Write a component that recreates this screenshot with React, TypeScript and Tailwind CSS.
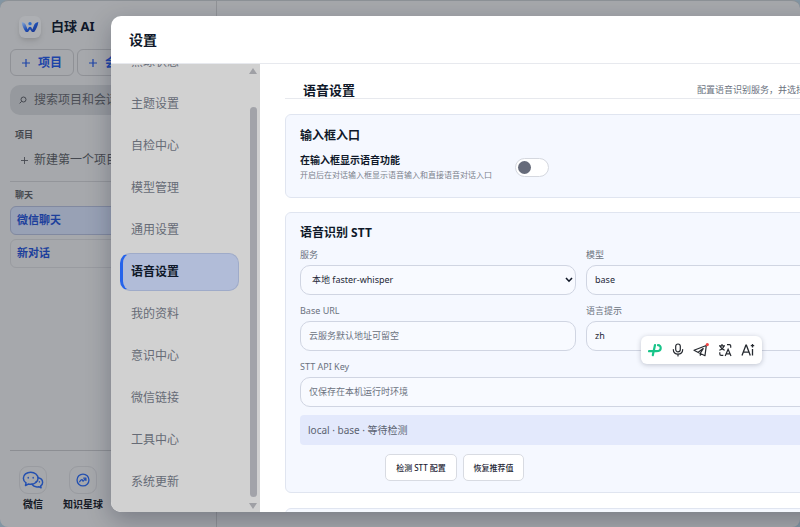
import React from "react";

interface FieldProps {
  id: string;
  label: string;
  value?: string;
  placeholder?: string;
  className?: string;
}

const Field: React.FC<FieldProps> = (props: FieldProps) => {
  const { id, label, value, placeholder, className = "" } = props;

  return (
    <div className={`flex flex-col ${className}`}>
      <label htmlFor={id} className="h-5 text-[9px] leading-5 text-[#6b7280]">
        {label}
      </label>
      <input
        id={id}
        className="h-[30px] w-full rounded-[10px] border border-[#d0d5e2] bg-[#f8faff] px-2 pb-[2px] text-[9px] text-[#1f2937] placeholder:text-[#6b7280]"
        defaultValue={value}
        placeholder={placeholder}
      />
    </div>
  );
};

const navItems = [
  "黑球状态",
  "主题设置",
  "自检中心",
  "模型管理",
  "通用设置",
  "语音设置",
  "我的资料",
  "意识中心",
  "微信链接",
  "工具中心",
  "系统更新",
];

const Logo = () => (
  <svg viewBox="0 0 24 24" className="h-5 w-5" fill="none">
    <defs>
      <linearGradient id="logo" x1="0" y1="0" x2="1" y2="1">
        <stop offset="0" stopColor="#8fadd4" />
        <stop offset="0.5" stopColor="#1f4fb4" />
        <stop offset="1" stopColor="#1a2f86" />
      </linearGradient>
    </defs>
    <path
      d="M2 6c3 .5 4.600 2.200 5.600 5l1.600 4 1.300-2.600c.6-1.100 2.400-1.100 3 0l1.300 2.600 1.600-4c1-2.800 2.600-4.500 5.600-5-.6 5-2.700 9-5 12h-2.600L12 14.600 9.600 18H7C4.700 15 2.600 11 2 6z"
      fill="url(#logo)"
    />
    <circle cx="12" cy="8" r="2" fill="#2c6bc8" />
  </svg>
);

const Plus = () => (
  <svg viewBox="0 0 8 8" className="h-2 w-2" stroke="currentColor" strokeWidth="1.200">
    <path d="M4 0v8M0 4h8" />
  </svg>
);

const Sidebar = () => (
  <aside className="flex w-[217px] shrink-0 flex-col border-r border-[#919397] px-[10px] pb-[15px]">
    <div className="mt-[14px] flex h-6 items-center gap-[10px] pl-[9px]">
      <span className="flex h-[22px] w-[22px] items-center justify-center rounded-md bg-[#adafb3] shadow-md">
        <Logo />
      </span>
      <h1 className="text-[13px] font-bold text-[#0f1829]">白球 AI</h1>
    </div>

    <div className="mt-[10px] flex gap-[3px]">
      <button className="flex h-[27px] w-16 shrink-0 items-center justify-center gap-2 rounded-md border border-[#8f9196] text-[12px] font-bold text-[#1d44a8]">
        <Plus /> 项目
      </button>
      <button className="flex h-[27px] w-16 shrink-0 items-center justify-center gap-2 rounded-md border border-[#8f9196] text-[12px] font-bold text-[#1d44a8]">
        <Plus /> 会话
      </button>
    </div>

    <div className="mt-[9px] flex h-[30px] items-center rounded-[10px] bg-[#96999e] pl-2">
      <svg viewBox="0 0 10 10" className="h-[10px] w-[10px] shrink-0" fill="none" stroke="#45484f">
        <circle cx="5.500" cy="4.500" r="2.500" />
        <path d="M3.700 6.300 1.600 8.400" />
      </svg>
      <input
        aria-label="搜索项目和会话"
        placeholder="搜索项目和会话"
        className="ml-[6px] w-full bg-transparent text-[12px] placeholder:text-[#4b4e55]"
      />
    </div>

    <h2 className="mt-3 pl-[5px] text-[9px] leading-4 font-bold text-[#45484f]">项目</h2>
    <button className="mt-[7px] flex h-5 items-center gap-[6px] pl-[11px] text-[12px] text-[#45484f]">
      <svg viewBox="0 0 8 8" className="h-[7px] w-[7px]" stroke="currentColor">
        <path d="M4 0v8M0 4h8" />
      </svg>
      新建第一个项目
    </button>

    <h2 className="mt-[11px] border-t border-[#93959a] pt-[5px] pl-[5px] text-[9px] leading-4 font-bold text-[#45484f]">
      聊天
    </h2>
    <button className="mt-[3px] h-[29px] shrink-0 rounded-md border border-[#8189a0] bg-[#98a1b5] pl-[6px] text-left text-[11px] font-bold text-[#1d3f9c]">
      微信聊天
    </button>
    <button className="mt-1 h-[29px] shrink-0 rounded-md border border-[#999ba0] pl-[6px] text-left text-[11px] font-bold text-[#1d3f9c]">
      新对话
    </button>

    <div className="mt-auto flex border-t border-[#8c8e93] pt-[15px] text-[10px] font-bold text-[#151a26]">
      <button className="flex w-[46px] flex-col items-center gap-[3px]">
        <span className="flex h-7 w-7 items-center justify-center rounded-[9px] border border-[#999ba0]">
          <svg viewBox="0 0 24 20" className="h-5 w-[22px]" fill="none" stroke="#2450b0" strokeWidth="1.600" strokeLinecap="round" strokeLinejoin="round">
            <path d="M9.500 1.500C5 1.500 1.500 4.300 1.500 8c0 2.100 1.100 3.900 2.900 5.100L3.800 16l3-1.600c.9.200 1.800.3 2.700.3 4.500 0 8-2.900 8-6.600s-3.500-6.600-8-6.600z" />
            <path d="M17.600 7.600c2.900.6 4.900 2.600 4.900 5 0 1.600-.8 2.900-2.100 3.800l.4 2.200-2.400-1.300c-3.100.6-6.200-.4-7.500-2.700" />
            <path d="M6.800 7.300v.6M12.200 7.300v.6M15.300 12v.2M19 12v.2" />
          </svg>
        </span>
        微信
      </button>
      <button className="flex w-[54px] flex-col items-center gap-[3px] whitespace-nowrap">
        <span className="flex h-7 w-7 items-center justify-center rounded-[9px] border border-[#999ba0]">
          <svg viewBox="0 0 16 16" className="h-[14px] w-[14px]" fill="none" stroke="#2450b0" strokeWidth="1.500" strokeLinecap="round" strokeLinejoin="round">
            <circle cx="8" cy="8" r="6.800" />
            <path d="M4.200 10c1.200-2 2.200-2.800 2.800-2.200.7.700.6 1.700 1.400 1.200L11 6.300M8.800 5.800l2.500.2v2.500" />
          </svg>
        </span>
        知识星球
      </button>
    </div>
  </aside>
);

const SettingsNav = () => (
  <div className="flex w-[149px] shrink-0 overflow-hidden bg-[#d1d1d1]">
    <nav className="-mt-[21px] flex flex-1 flex-col gap-1 px-[9px]">
      {navItems.map((item) => (
        <button
          key={item}
          className={`h-[38px] shrink-0 rounded-[10px] text-left text-[12px] ${
            item === "语音设置"
              ? "border border-l-[3px] border-[#9fabc9] border-l-[#2563eb] bg-[#b1bcd8] pl-2 font-bold text-[#0f1829]"
              : "pl-[11px] text-[#666b76]"
          }`}
        >
          {item}
        </button>
      ))}
    </nav>
    <div className="flex w-3 flex-col items-center pt-1 pr-[2px] pb-[3px]">
      <svg viewBox="0 0 8 6" className="h-[6px] w-2" fill="#9fa0a5">
        <path d="M4 0l4 6H0z" />
      </svg>
      <div className="mt-[33px] w-[7px] flex-1 rounded-full bg-[#a2a3a9]" />
      <svg viewBox="0 0 8 6" className="mt-[6px] h-[6px] w-2" fill="#9fa0a5">
        <path d="M0 0h8L4 6z" />
      </svg>
    </div>
  </div>
);

const VoiceSettings = () => (
  <main className="flex-1 overflow-hidden pt-[15px] pr-4 pl-[25px]">
    <div className="flex h-5 items-end justify-between border-b border-[#e7e9ee] pl-[18px] whitespace-nowrap">
      <h3 className="text-[13px] leading-4 font-bold text-[#0f1829]">语音设置</h3>
      <p className="text-[9px] leading-4 text-[#6b7280]">配置语音识别服务，并选择语音对话使用方式</p>
    </div>

    <section className="mt-[15px] h-[84px] rounded-md border border-[#e0e5f0] bg-[#f5f8ff] px-[14px] pt-[13px]">
      <h4 className="text-[12px] leading-4 font-bold text-[#0f1829]">输入框入口</h4>
      <div className="mt-2 flex items-center gap-[18px]">
        <div className="w-[197px] whitespace-nowrap">
          <label htmlFor="voice" className="block text-[10px] leading-4 font-bold text-[#0f1829]">
            在输入框显示语音功能
          </label>
          <p className="text-[8px] leading-[14px] text-[#7b818c]">
            开启后在对话输入框显示语音输入和直接语音对话入口
          </p>
        </div>
        <input
          id="voice"
          type="checkbox"
          role="switch"
          className="h-[19px] w-[34px] appearance-none rounded-full border border-[#d5d8df] bg-white p-[2px] before:block before:h-[13px] before:w-[13px] before:rounded-full before:bg-[#666b7a] checked:before:ml-auto"
        />
      </div>
    </section>

    <section className="mt-[14px] h-[281px] rounded-md border border-[#e0e5f0] bg-[#f5f8ff] px-[14px] pt-3">
      <h4 className="text-[12px] leading-4 font-bold text-[#0f1829]">语音识别 STT</h4>
      <div className="mt-1 grid grid-cols-2 gap-x-[10px] gap-y-[6px]">
        <div className="relative flex flex-col">
          <label htmlFor="service" className="h-5 text-[9px] leading-5 text-[#6b7280]">
            服务
          </label>
          <select
            id="service"
            className="h-[30px] appearance-none rounded-[10px] border border-[#d0d5e2] bg-[#f8faff] px-[11px] text-[9px] text-[#1f2937]"
          >
            <option>本地 faster-whisper</option>
          </select>
          <svg viewBox="0 0 8 6" className="pointer-events-none absolute right-[3px] bottom-3 h-[6px] w-2" fill="none" stroke="#111827" strokeWidth="1.600">
            <path d="M1 1l3 3.200L7 1" />
          </svg>
        </div>
        <Field id="model" label="模型" value="base" />
        <Field id="url" label="Base URL" placeholder="云服务默认地址可留空" />
        <Field id="lang" label="语言提示" value="zh" />
        <Field id="key" label="STT API Key" placeholder="仅保存在本机运行时环境" className="col-span-2" />
      </div>
      <p className="mt-2 h-[30px] rounded bg-[#e3e9fc] px-2 text-[10px] leading-[30px] text-[#5b6371]">
        local · base · 等待检测
      </p>
      <div className="mt-[9px] flex gap-[6px] pl-[85px] text-[8px] font-medium text-[#1c2433]">
        <button className="h-[27px] w-[72px] rounded-[5px] border border-[#d8dbe2] bg-white">检测 STT 配置</button>
        <button className="h-[27px] w-[61px] rounded-[5px] border border-[#d8dbe2] bg-white">恢复推荐值</button>
      </div>
    </section>

    <section className="mt-[15px] h-20 rounded-md border border-[#e0e5f0] bg-[#f5f8ff]" />
  </main>
);

const AssistBar = () => (
  <div className="absolute top-[336px] left-[641px] flex h-[28px] w-[121px] items-center justify-around rounded-md bg-white px-[3px] shadow-[0_1px_5px_rgba(30,41,59,0.25)]">
    <button aria-label="打开助手">
      <svg viewBox="0 0 14 14" className="h-[14px] w-[14px]" fill="none" stroke="#18c489" strokeWidth="2.200" strokeLinecap="round" strokeLinejoin="round">
        <path d="M1 8.200h7.200c2.700 0 4.500-1.300 4.500-3.300 0-1.600-1-2.700-2.700-2.700M7 2 4.800 12.200" />
      </svg>
    </button>
    <button aria-label="语音输入">
      <svg viewBox="0 0 14 14" className="h-[14px] w-[14px]" fill="none" stroke="#262a30" strokeWidth="1.200" strokeLinecap="round">
        <rect x="4.700" y="1" width="4.600" height="7.800" rx="2.300" />
        <path d="M2.300 6.500c0 3 2 4.700 4.700 4.700s4.700-1.700 4.700-4.700M7 11.200V13" />
      </svg>
    </button>
    <button aria-label="发送">
      <svg viewBox="0 0 16 14" className="h-[14px] w-4" fill="none" stroke="#262a30" strokeWidth="1.200" strokeLinejoin="round">
        <path d="M13.300 2.500 1 7.300l3.800 1.900L12 12.700zM5.200 9.300l5-3.700-2.900 4.700v2.500" />
        <circle cx="14.300" cy="1.600" r="1.600" fill="#f04444" stroke="none" />
      </svg>
    </button>
    <button aria-label="翻译">
      <svg viewBox="0 0 14 14" className="h-[14px] w-[14px]" fill="none" stroke="#262a30" strokeWidth="1.200">
        <path d="M1 2.800h6M4 1v1.800M1.300 7.200C3.800 6.300 5.500 5 5.900 2.800M2.100 2.800c.6 2 2.200 3.500 4.600 4.400M9 1.600h2.500c.8 0 1.200.5 1.200 1.200v2M1.800 9.300v1.800c0 .8.500 1.300 1.300 1.300h2.200M7.200 13l2.900-6.700L13 13M8.200 10.900H12" />
      </svg>
    </button>
    <button aria-label="AI">
      <svg viewBox="0 0 14 14" className="h-[14px] w-[14px]" fill="none" stroke="#262a30" strokeWidth="1.300">
        <path d="M1 12.500 4.900 2.200h.5l3.900 10.300M2.400 9.200h5.500M11.500 6v6.500M11.500 1v3.400M9.800 2.700h3.400" />
      </svg>
    </button>
  </div>
);

export default function App() {
  return (
    <div className="relative h-screen overflow-hidden bg-[#8295a3] font-['Noto_Sans','Noto_Sans_CJK_SC',sans-serif]">
      <div className="flex h-full rounded-lg border-t border-[#8c9196] bg-[#a6a8ac]">
        <Sidebar />
      </div>

      <div className="absolute inset-0 flex overflow-hidden pt-4 pb-[15px] pl-[111px]">
        <div
          role="dialog"
          aria-labelledby="settings-title"
          className="flex w-full min-w-[782px] flex-col rounded-[10px] bg-white shadow-[0_8px_24px_rgba(15,23,42,0.3)]"
        >
          <header className="flex h-12 shrink-0 items-center rounded-t-[10px] border-b border-[#e7e9ee] pl-[18px]">
            <h2 id="settings-title" className="text-[14px] font-bold text-[#0f1829]">
              设置
            </h2>
          </header>
          <div className="flex min-h-0 flex-1 overflow-hidden rounded-b-[10px]">
            <SettingsNav />
            <VoiceSettings />
          </div>
        </div>
      </div>

      <AssistBar />
    </div>
  );
}
